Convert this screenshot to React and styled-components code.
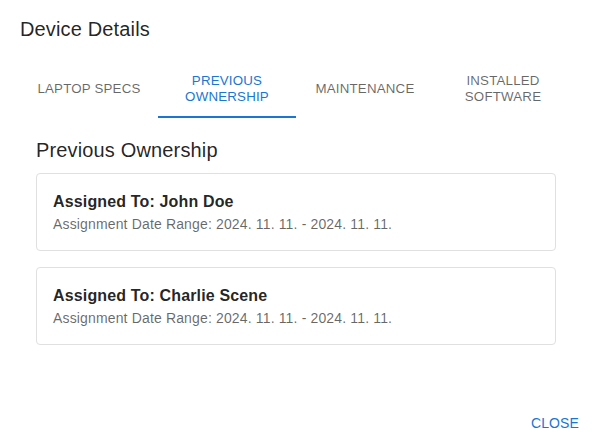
import React, { useState } from 'react';
import styled, { createGlobalStyle } from 'styled-components';

const GlobalStyle = createGlobalStyle`
  html, body {
    margin: 0;
    padding: 0;
    background: #ffffff;
  }
  body {
    font-family: "Liberation Sans", Arial, sans-serif;
    color: rgba(0, 0, 0, 0.87);
  }
`;

const Dialog = styled.div`
  width: 595px;
  height: 448px;
  display: flex;
  flex-direction: column;
  background: #ffffff;
  overflow: hidden;
`;

const DialogTitle = styled.h2`
  margin: 0;
  padding: 13px 20px 0;
  font-weight: 400;
  font-size: 20px;
  line-height: 32px;
  letter-spacing: 0.15px;
  color: rgba(0, 0, 0, 0.87);
`;

const TabList = styled.div`
  margin-top: 14px;
  padding: 0 20px;
  display: grid;
  grid-template-columns: repeat(4, 138px);
`;

const Tab = styled.button`
  height: 59px;
  padding: 2px 12px 0;
  border: 0;
  border-bottom: 2px solid ${({ $active }) => ($active ? '#1976d2' : 'transparent')};
  background: none;
  font-family: inherit;
  font-size: 13.3px;
  line-height: 16px;
  letter-spacing: 0.2px;
  text-transform: uppercase;
  text-align: center;
  color: ${({ $active }) => ($active ? '#1976d2' : 'rgba(0, 0, 0, 0.6)')};
  cursor: pointer;
  display: flex;
  align-items: center;
  justify-content: center;
`;

const Content = styled.section`
  padding: 16px 39px 0 36px;
`;

const SectionTitle = styled.h3`
  margin: 0 0 7px;
  font-weight: 400;
  font-size: 20px;
  line-height: 32px;
  letter-spacing: 0.15px;
`;

const CardList = styled.div`
  display: flex;
  flex-direction: column;
  gap: 16px;
`;

const Card = styled.div`
  border: 1px solid #e0e0e0;
  border-radius: 4px;
  padding: 16px;
`;

const CardTitle = styled.div`
  font-weight: 700;
  font-size: 16px;
  line-height: 24px;
  letter-spacing: 0.15px;
  color: rgba(0, 0, 0, 0.87);
`;

const CardMeta = styled.div`
  font-size: 14px;
  line-height: 20px;
  letter-spacing: 0.15px;
  color: rgba(0, 0, 0, 0.6);
`;

const Actions = styled.div`
  margin-top: auto;
  padding: 8px 8px 7px;
  display: flex;
  justify-content: flex-end;
`;

const TextButton = styled.button`
  min-width: 64px;
  padding: 6px 8px;
  border: 0;
  background: none;
  border-radius: 4px;
  font-family: inherit;
  font-size: 14px;
  line-height: 24.5px;
  letter-spacing: 0.1px;
  text-transform: uppercase;
  color: #1976d2;
  cursor: pointer;
`;

const tabs = ['Laptop Specs', 'Previous Ownership', 'Maintenance', 'Installed Software'];

const owners = [
  { name: 'John Doe', from: '2024. 11. 11.', to: '2024. 11. 11.' },
  { name: 'Charlie Scene', from: '2024. 11. 11.', to: '2024. 11. 11.' },
];

export default function App() {
  const [active, setActive] = useState(1);

  return (
    <>
      <GlobalStyle />
      <Dialog>
        <DialogTitle>Device Details</DialogTitle>
        <TabList>
          {tabs.map((t, i) => (
            <Tab key={t} $active={i === active} onClick={() => setActive(i)}>
              {t}
            </Tab>
          ))}
        </TabList>
        <Content>
          <SectionTitle>Previous Ownership</SectionTitle>
          <CardList>
            {owners.map((o) => (
              <Card key={o.name}>
                <CardTitle>Assigned To: {o.name}</CardTitle>
                <CardMeta>
                  Assignment Date Range: {o.from} - {o.to}
                </CardMeta>
              </Card>
            ))}
          </CardList>
        </Content>
        <Actions>
          <TextButton>Close</TextButton>
        </Actions>
      </Dialog>
    </>
  );
}
